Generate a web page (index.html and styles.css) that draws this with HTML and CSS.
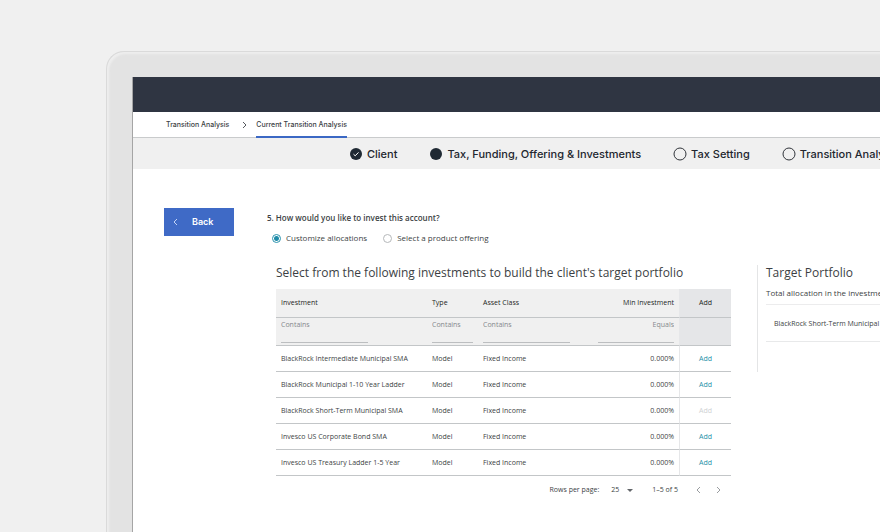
FILE: index.html
```html
<!DOCTYPE html>
<html lang="en">
<head>
<meta charset="utf-8">
<title>Current Transition Analysis</title>
<link rel="stylesheet" href="styles.css">
</head>
<body>
<div class="device">
  <div class="screen">
    <header class="topbar"></header>
    <nav class="crumbs" aria-label="Breadcrumb">
      <a class="crumb" href="#">Transition Analysis</a>
      <svg class="crumb-arrow" viewBox="0 0 5 8" aria-hidden="true"><path d="M1 1l3 3-3 3"/></svg>
      <a class="crumb current" href="#" aria-current="page">Current Transition Analysis</a>
    </nav>
    <ol class="steps">
      <li class="step"><svg class="dot" viewBox="0 0 12 12" aria-hidden="true"><circle class="solid" cx="6" cy="6" r="6"/><path class="tick" d="M3.5 6.2l1.7 1.6 3.3-3.4"/></svg>Client</li>
      <li class="step"><svg class="dot" viewBox="0 0 12 12" aria-hidden="true"><circle class="solid" cx="6" cy="6" r="6"/></svg>Tax, Funding, Offering &amp; Investments</li>
      <li class="step"><svg class="dot" viewBox="0 0 12 12" aria-hidden="true"><circle class="ring" cx="6" cy="6" r="6"/></svg>Tax Setting</li>
      <li class="step"><svg class="dot" viewBox="0 0 12 12" aria-hidden="true"><circle class="ring" cx="6" cy="6" r="6"/></svg>Transition Analysis</li>
    </ol>
    <main class="content">
      <button class="back" type="button"><svg class="back-arrow" viewBox="0 0 5 8" aria-hidden="true"><path d="M4 1L1 4l3 3"/></svg>Back</button>
      <div class="question">
        <fieldset class="choices">
          <legend>5. How would you like to invest this account?</legend>
          <div class="options">
            <label><input type="radio" name="mode" checked>Customize allocations</label>
            <label><input type="radio" name="mode">Select a product offering</label>
          </div>
        </fieldset>
        <div class="panels">
          <section class="picker">
            <h2>Select from the following investments to build the client's target portfolio</h2>
            <table>
              <colgroup><col class="c-name"><col class="c-type"><col class="c-class"><col class="c-min"><col class="c-add"></colgroup>
              <thead>
                <tr class="heads"><th>Investment</th><th>Type</th><th>Asset Class</th><th class="num">Min Investment</th><th class="add">Add</th></tr>
                <tr class="filters">
                  <td><input class="wide" type="text" placeholder="Contains" aria-label="Filter investment"></td>
                  <td><input type="text" placeholder="Contains" aria-label="Filter type"></td>
                  <td><input class="wide" type="text" placeholder="Contains" aria-label="Filter asset class"></td>
                  <td class="num"><input class="amount" type="text" placeholder="Equals" aria-label="Filter minimum investment"></td>
                  <td class="add"></td>
                </tr>
              </thead>
              <tbody>
                <tr><td>BlackRock Intermediate Municipal SMA</td><td>Model</td><td>Fixed Income</td><td class="num">0.000%</td><td class="add"><button type="button">Add</button></td></tr>
                <tr><td>BlackRock Municipal 1-10 Year Ladder</td><td>Model</td><td>Fixed Income</td><td class="num">0.000%</td><td class="add"><button type="button">Add</button></td></tr>
                <tr><td>BlackRock Short-Term Municipal SMA</td><td>Model</td><td>Fixed Income</td><td class="num">0.000%</td><td class="add"><button type="button" disabled>Add</button></td></tr>
                <tr><td>Invesco US Corporate Bond SMA</td><td>Model</td><td>Fixed Income</td><td class="num">0.000%</td><td class="add"><button type="button">Add</button></td></tr>
                <tr><td>Invesco US Treasury Ladder 1-5 Year</td><td>Model</td><td>Fixed Income</td><td class="num">0.000%</td><td class="add"><button type="button">Add</button></td></tr>
              </tbody>
            </table>
            <div class="pager">
              <label for="rows">Rows per page:</label>
              <span class="rows"><select id="rows"><option>25</option></select><svg viewBox="0 0 6 3" aria-hidden="true"><path d="M0 0h6L3 3z"/></svg></span>
              <span class="range">1–5 of 5</span>
              <button type="button" aria-label="Previous page"><svg viewBox="0 0 5 8" aria-hidden="true"><path d="M4 1L1 4l3 3"/></svg></button>
              <button type="button" aria-label="Next page"><svg viewBox="0 0 5 8" aria-hidden="true"><path d="M1 1l3 3-3 3"/></svg></button>
            </div>
          </section>
          <aside class="target">
            <h2>Target Portfolio</h2>
            <p class="total">Total allocation in the investments</p>
            <p class="holding">BlackRock Short-Term Municipal SMA</p>
          </aside>
        </div>
      </div>
    </main>
  </div>
</div>
</body>
</html>
```
FILE: styles.css
```css
* { box-sizing: border-box; }
body {
  margin: 0;
  min-height: 100vh;
  display: flex;
  overflow: hidden;
  background: #f0f0f0;
  color: #3c3f44;
  font-family: "Open Sans", sans-serif;
  font-size: 7px;
  line-height: 12px;
}
button, input, select { font: inherit; color: inherit; margin: 0; padding: 0; border: 0; background: none; }
a { color: inherit; text-decoration: none; }
h2 { margin: 0; font-size: 12px; line-height: 16px; font-weight: 400; }
p { margin: 0; }

.device {
  flex: 1;
  min-width: 0;
  display: flex;
  margin: 51px 0 0 106px;
  padding: 25px 0 0 26px;
  border: solid #dadada;
  border-width: 1px 0 0 1px;
  border-top-left-radius: 18px;
  background: #e3e3e3;
  box-shadow: inset 2px 2px 2px #eeeeee;
}
.screen {
  flex: 1;
  min-width: 0;
  overflow: hidden;
  background: #fff;
  box-shadow: -1px 0 0 #a5a5a5;
}
.topbar { height: 35px; background: #2f3542; }

.crumbs {
  display: flex;
  align-items: center;
  height: 26px;
  padding-left: 33px;
  border-bottom: 1px solid #c9cbcc;
  font-family: Inter, sans-serif;
  font-weight: 500;
}
.crumb { height: 26px; line-height: 26px; }
.crumb.current { border-bottom: 2px solid #3b68c4; }
.crumb-arrow { width: 5px; height: 8px; margin: 0 9px 0 13px; }
.crumb-arrow path, .pager button path { fill: none; stroke: #55585d; }

.steps {
  display: flex;
  align-items: center;
  gap: 33px;
  height: 31px;
  margin: 0;
  padding: 0 0 0 217px;
  background: #f0f0f0;
  list-style: none;
  color: #22262e;
  font-family: Inter, sans-serif;
  font-size: 11px;
  font-weight: 500;
  white-space: nowrap;
}
.step { display: flex; align-items: center; gap: 5px; }
.dot { width: 12px; height: 12px; overflow: visible; }
.solid { fill: #1f2933; }
.ring { fill: none; stroke: #30343a; }
.tick { fill: none; stroke: #fff; }

.content { display: flex; align-items: flex-start; padding: 39px 0 0 31px; }
.back {
  display: flex;
  align-items: center;
  flex: none;
  gap: 14px;
  width: 70px;
  height: 28px;
  padding-left: 9px;
  background: #3f6ac6;
  color: #fff;
  font-family: Inter, sans-serif;
  font-size: 9px;
  font-weight: 600;
}
.back-arrow { width: 5px; height: 8px; }
.back-arrow path { fill: none; stroke: #c5d4f5; }
.question { flex: 1; min-width: 0; padding: 4px 0 0 33px; }
.choices { margin: 0; padding: 0; border: 0; }
.choices legend { padding: 0; font-size: 8px; font-weight: 600; }
.options { display: flex; gap: 16px; padding: 8px 0 0 5px; font-size: 8px; }
.options label { display: flex; align-items: center; gap: 5px; }
.options input {
  appearance: none;
  width: 9px;
  height: 9px;
  border: 1px solid #b5b8ba;
  border-radius: 50%;
}
.options input:checked {
  border-color: #2b93ae;
  background: radial-gradient(circle, #1f8ba8 2px, #fff 3px);
}

.panels { display: flex; align-items: flex-start; gap: 26px; padding: 21px 0 0 9px; }
.picker { flex: none; width: 455px; white-space: nowrap; }
table { width: 100%; margin-top: 8px; border-collapse: separate; border-spacing: 0; table-layout: fixed; }
.c-name { width: 151px; }
.c-type { width: 51px; }
.c-class { width: 96px; }
.c-add { width: 52px; }
th, td { height: 26px; padding: 0 5px; border-bottom: 1px solid #c3c6c8; text-align: left; font-weight: 400; }
th { color: #1c1f24; }
thead { background: #f0f0f0; }
.heads th { height: 29px; }
.filters td { height: 28px; }
.num { text-align: right; }
.add { text-align: center; border-left: 1px solid #e6e7e9; }
thead .add { background: #e5e6e8; }
tbody .add { color: #2590a8; }
.add button:disabled { color: #cfd2d4; }
.filters td { vertical-align: top; }
.filters input { display: block; width: 100%; height: 25px; padding-bottom: 12px; border-bottom: 1px solid #bcbec0; }
.filters input.wide { width: 87px; }
.filters input.amount { width: 76px; margin-left: auto; text-align: right; }
.filters input::placeholder { color: #85888c; opacity: 1; }

.pager { display: flex; align-items: center; justify-content: flex-end; padding: 8px 10px 0 0; }
.rows { display: flex; align-items: center; gap: 7px; margin-left: 12px; }
.rows select { appearance: none; }
.rows svg { width: 6px; height: 3px; fill: #63666a; }
.range { margin: 0 18px 0 19px; }
.pager button { display: flex; }
.pager button + button { margin-left: 15px; }
.pager button svg { width: 5px; height: 8px; }
.pager button path { stroke: #999c9f; }

.target {
  flex: 1;
  min-width: 0;
  height: 107px;
  padding-left: 8px;
  border-left: 1px solid #e4e5e6;
  white-space: nowrap;
  overflow: hidden;
}
.total { padding: 6px 0 5px; font-size: 8px; border-bottom: 1px solid #ececed; }
.holding { padding: 13px 8px 11px; border-bottom: 1px solid #e8e9ea; }
```
